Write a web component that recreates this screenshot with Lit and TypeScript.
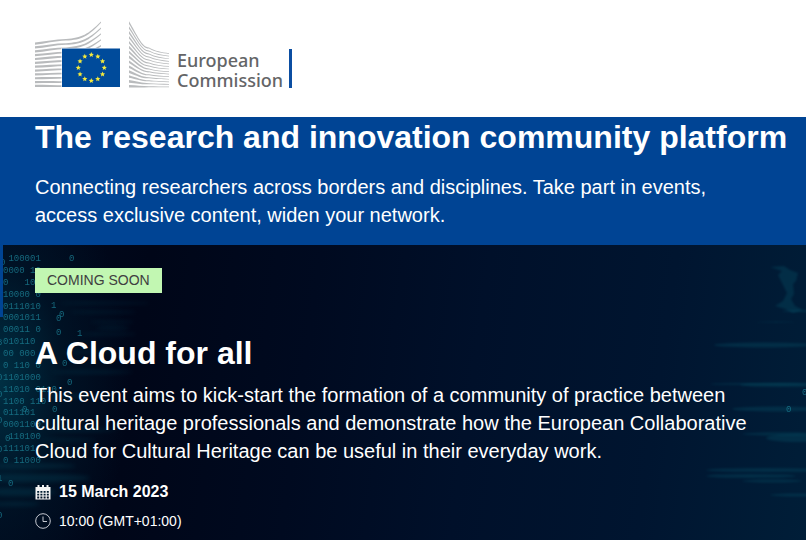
import { LitElement, html, svg, css } from "lit";
import { customElement } from "lit/decorators.js";

const BUILDING_GREY = "#b9bbbd";

/** Tapered strokes of the left wing of the building, thick on the left. */
const leftWing = Array.from({ length: 12 }, (_, i) => {
  const flat = i / 11;
  const y = 43.6 + i * 3.85;
  const endY = 22 + i * 5.9;
  const mid = y - 4 * (1 - flat);
  const bend = y - 7 * (1 - flat);
  return `M35 ${y - 1.1}C45 ${y - 2.1 + flat} 55 ${mid - 0.6} 66 ${mid - 0.6}C82 ${mid - 2} 88 ${bend - 2} 101 ${endY - 0.5}V${endY + 0.8}C88 ${bend} 82 ${mid + 0.4} 66 ${mid + 1}C55 ${mid + 1.2} 45 ${y + 0.4 + flat * 0.6} 35 ${y + 1.1}Z`;
}).join("");

/** Tapered strokes of the right wing, falling from the tall edge. */
const rightWing = Array.from({ length: 14 }, (_, i) => {
  const flat = i / 13;
  const y = 22.6 + i * 4.9;
  const endY = 53.6 + i * 2.56;
  const bend = y + (endY - y) * 0.82;
  return `M129 ${y - 1.3}C137 ${y + 13 * (1 - flat) - 1} 142 ${bend - 0.6} 149 ${bend - 0.5}C155 ${endY - 2 * (1 - flat) - 0.4} 162 ${endY - (1 - flat) - 0.4} 169 ${endY - 0.3}V${endY + 0.4}C162 ${endY - (1 - flat) + 0.4} 155 ${endY - 2 * (1 - flat) + 0.5} 149 ${bend + 0.5}C142 ${bend + 0.8} 137 ${y + 13 * (1 - flat) + 1} 129 ${y + 1.3}Z`;
}).join("");

const starPoints = (cx: number, cy: number, r: number) =>
  Array.from({ length: 10 }, (_, k) => {
    const a = -Math.PI / 2 + (k * Math.PI) / 5;
    const d = k % 2 ? r * 0.45 : r;
    return `${(cx + d * Math.cos(a)).toFixed(2)},${(cy + d * Math.sin(a)).toFixed(2)}`;
  }).join(" ");

const stars = Array.from({ length: 12 }, (_, k) => {
  const a = (k * Math.PI) / 6;
  return starPoints(91.3 + 13 * Math.cos(a), 67.8 + 13 * Math.sin(a), 2.7);
});

@customElement("ec-emblem")
export class EcEmblem extends LitElement {
  static styles = css`
    :host { display: block; flex: none; width: 134px; height: 67px; }
    svg { display: block; width: 100%; height: 100%; }
  `;
  render() {
    return html`<svg viewBox="35 21 134 67" aria-hidden="true">
      <path d=${leftWing} fill=${BUILDING_GREY} />
      <path d=${rightWing} fill=${BUILDING_GREY} />
      <rect x="61.5" y="48" width="59" height="40" fill="#fff" />
      <rect x="62" y="48.5" width="58" height="38.5" fill="#004b9b" />
      ${stars.map((p) => svg`<polygon points=${p} fill="#f5ea3c" />`)}
    </svg>`;
  }
}

const digitRows = [
  " 100001", "0000 10", "0   10", "10000 0", "0111010", "0001011",
  "00011 0", "010110", "00 000", "0 110 0", "1101000", "11010 0110",
  "1100 110", "011101", "0001100", " 110100", "111101", "0 11000",
];

const strayDigits: [number, number, string][] = [
  [69, 261, "0"], [51, 308, "1"], [59, 317, "0"], [56, 321, "0"],
  [56, 335, "0"], [77, 336, "1"], [62, 366, "0"], [67, 385, "0"],
  [52, 412, "0"], [22, 412, "0"], [5, 441, "0"], [8, 486, "0"],
  [-3, 380, "0"], [-3, 397, "0"], [-3, 423, "0"], [-3, 452, "0"],
  [-3, 481, "1"], [-3, 518, "0"], [-3, 345, "8"], [0, 265, "0"],
];

const leftStreaks = [
  [60, 303, 90, 2], [70, 312, 66, 2], [90, 322, 44, 2], [96, 328, 34, 3],
  [80, 334, 56, 2], [60, 352, 80, 2], [50, 372, 84, 3], [48, 430, 70, 3],
  [40, 440, 56, 2], [-10, 466, 86, 5], [-20, 478, 110, 8], [-20, 492, 76, 8],
  [-10, 504, 50, 4], [44, 396, 60, 3],
];

/* Start x, centre y, width and height within the 120px strip at the right. */
const rightStreaks = [
  [28, 345, 100, 5], [70, 322, 40, 1], [24, 384, 120, 2], [54, 385, 80, 4],
  [46, 409, 90, 5], [56, 434, 80, 3], [80, 438, 60, 8], [20, 470, 120, 4],
  [20, 476, 90, 4], [56, 481, 60, 3], [84, 495, 60, 3], [96, 311, 40, 2],
];

@customElement("data-backdrop")
export class DataBackdrop extends LitElement {
  static styles = css`
    :host {
      display: block;
      overflow: hidden;
      background:
        radial-gradient(ellipse 130px 230px at 0 46%, rgba(0, 62, 82, 0.72), rgba(0, 32, 50, 0.4) 50%, transparent),
        linear-gradient(98deg, #000a1e 0, #000618 18%, #000a20 38%, #00102a 58%, #001530 80%, #001e38 100%);
    }
    svg { display: block; position: absolute; top: 0; }
    .left { left: 0; }
    .right { right: 0; }
    .streak { fill: #075066; opacity: 0.35; filter: blur(1px); }
    .left .streak { opacity: 0.28; filter: blur(2px); }
    text {
      font: 9px "Liberation Mono", monospace;
      fill: #1c8499;
      opacity: 0.75;
      white-space: pre;
    }
  `;
  render() {
    return html`
      <svg class="left" width="180" height="295" viewBox="0 245 180 295" aria-hidden="true">
        ${leftStreaks.map(([x, y, w, h]) => svg`<ellipse class="streak" cx=${x + w / 2} cy=${y} rx=${w / 2} ry=${h / 2} />`)}
        ${digitRows.map((row, i) => svg`<text x="3" y=${261 + Math.round(i * 11.88)}>${row}</text>`)}
        ${strayDigits.map(([x, y, d]) => svg`<text x=${x} y=${y}>${d}</text>`)}
      </svg>
      <svg class="right" width="120" height="295" viewBox="0 245 120 295" aria-hidden="true">
        ${rightStreaks.map(([x, y, w, h]) => svg`<ellipse class="streak" cx=${x + w / 2} cy=${y} rx=${w / 2} ry=${h / 2} />`)}
        <path class="streak" d="M84 267l14-1 6 4 8 3-2 8-3 3 1 10-3 5 4 7 8 4-10 3-8-4-10-3 8-5 4-8-5-10-4-8 4-4z" />
        <text x="116" y="395">0</text>
        <text x="100" y="412">0</text>
      </svg>`;
  }
}

@customElement("app-root")
export class AppRoot extends LitElement {
  static styles = css`
    :host {
      display: flex;
      flex-direction: column;
      min-height: 100vh;
      font-family: "Liberation Sans", Arial, sans-serif;
      color: #fff;
      background: #004494;
    }
    * { box-sizing: border-box; }
    h1, h2, p { margin: 0; }
    h1, h2 { font-size: 32px; line-height: 40px; font-weight: 700; }
    .header { background: #fff; padding: 21px 35px 29px; }
    .brand {
      display: flex;
      width: fit-content;
      align-items: flex-end;
      text-decoration: none;
      color: #646567;
    }
    .name {
      margin: 0 6px -2px 8px;
      font: 500 18px/20px "Noto Sans", "Open Sans", sans-serif;
    }
    .name span { display: block; }
    .bar { width: 3px; height: 39px; background: #0b4ea2; }
    .hero { padding: 0 16px 16px 35px; }
    .lead { font-size: 20px; line-height: 28px; max-width: 720px; }
    .hero .lead { margin-top: 16px; }
    .event {
      position: relative;
      flex: 1;
      padding: 23px 35px 8px;
      isolation: isolate;
    }
    data-backdrop { position: absolute; inset: 0; z-index: -1; }
    .edge {
      position: absolute;
      left: 0;
      top: 0;
      width: 3px;
      height: 72px;
      background: #004494;
      z-index: -1;
    }
    .tag {
      display: block;
      width: fit-content;
      padding: 0 12px;
      font-size: 14px;
      line-height: 25px;
      color: #404040;
      background: #c2f7b2;
    }
    h2 { margin: 40px 0 8px; }
    .facts { display: grid; gap: 5px; margin-top: 15px; }
    .fact { display: flex; align-items: center; gap: 8px; line-height: 24px; font-size: 14px; }
    .fact svg { width: 16px; height: 16px; flex: none; }
    .date { font-size: 16px; font-weight: 700; }
  `;

  render() {
    return html`
      <header class="header">
        <a class="brand" href="#" aria-label="European Commission">
          <ec-emblem></ec-emblem>
          <span class="name"><span>European</span><span>Commission</span></span>
          <span class="bar"></span>
        </a>
      </header>
      <main>
        <section class="hero">
          <h1>The research and innovation community platform</h1>
          <p class="lead">Connecting researchers across borders and disciplines. Take part in events, access exclusive content, widen your network.</p>
        </section>
      </main>
      <section class="event">
        <data-backdrop></data-backdrop>
        <span class="edge"></span>
        <span class="tag">COMING SOON</span>
        <h2>A Cloud for all</h2>
        <p class="lead">This event aims to kick-start the formation of a community of practice between cultural heritage professionals and demonstrate how the European Collaborative Cloud for Cultural Heritage can be useful in their everyday work.</p>
        <div class="facts">
          <div class="fact date">
            <svg viewBox="0 0 16 16" aria-hidden="true">
              <path fill="#f4f4f4" fill-rule="evenodd" d="M0.5 3h2V1h2v2h2.5V1h2v2h2.5V1h2v2h2v12.5H0.5zM2.2 7v1.8h2V7zm3.2 0v1.8h2V7zm3.2 0v1.8h2V7zm3.2 0v1.8h2V7zM2.2 9.8v1.8h2V9.8zm3.2 0v1.8h2V9.8zm3.2 0v1.8h2V9.8zm3.2 0v1.8h2V9.8zM2.2 12.6v1.8h2v-1.8zm3.2 0v1.8h2v-1.8zm3.2 0v1.8h2v-1.8zm3.2 0v1.8h2v-1.8z" />
            </svg>
            <span>15 March 2023</span>
          </div>
          <div class="fact">
            <svg viewBox="0 0 16 16" fill="none" stroke="#c4c8d0" aria-hidden="true">
              <circle cx="8" cy="8" r="7.3" />
              <path d="M8 3.5V8.5H12" />
            </svg>
            <span>10:00 (GMT+01:00)</span>
          </div>
        </div>
      </section>`;
  }
}
